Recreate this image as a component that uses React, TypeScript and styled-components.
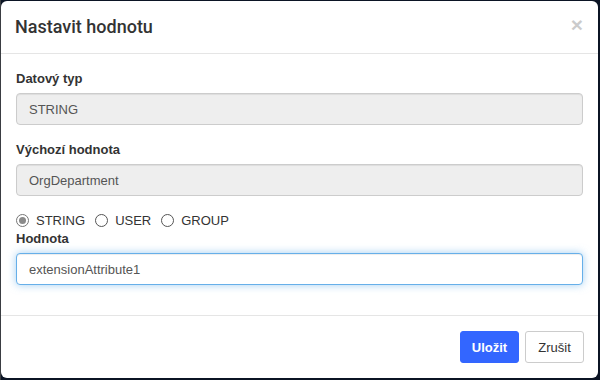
import React from "react";
import styled, { createGlobalStyle } from "styled-components";

const Global = createGlobalStyle`
	html, body {
		margin: 0;
		padding: 0;
		background: #0b1424;
	}
	body {
		font-family: "Liberation Sans", Arial, sans-serif;
		font-size: 13px;
		color: #333;
	}
`;

const Backdrop = styled.div`
	width: 600px;
	height: 380px;
	padding: 1px 2px 2px 1px;
	box-sizing: border-box;
	background: linear-gradient(90deg, #3a3d42 0 1px, #0b1424 1px);
`;

const Modal = styled.div`
	width: 100%;
	height: 100%;
	background: #fff;
	border-radius: 6px;
	display: flex;
	flex-direction: column;
	overflow: hidden;
`;

const Header = styled.div`
	display: flex;
	align-items: center;
	justify-content: space-between;
	padding: 15px 15px 15px 14px;
	height: 22px;
	border-bottom: 1px solid #e5e5e5;
`;

const Title = styled.h4`
	margin: 0;
	font-family: Roboto, "Liberation Sans", sans-serif;
	font-size: 18px;
	font-weight: 500;
	color: #333;
	line-height: 22px;
`;

const Close = styled.button`
	border: 0;
	background: none;
	padding: 0;
	margin: -6px 0 0 0;
	font-size: 21px;
	font-weight: 700;
	line-height: 1;
	color: #000;
	opacity: 0.2;
	font-family: "Liberation Sans", Arial, sans-serif;
`;

const Body = styled.div`
	padding: 15px 15px 0 15px;
	flex: 1;
`;

const Group = styled.div`
	margin-bottom: 15px;
`;

const Label = styled.label`
	display: block;
	font-weight: 700;
	margin-bottom: 5px;
	line-height: 19px;
	color: #333;
`;

const Input = styled.input<{ $focus?: boolean }>`
	display: block;
	width: 100%;
	box-sizing: border-box;
	height: 32px;
	padding: 6px 12px;
	font-size: 13px;
	font-family: "Liberation Sans", Arial, sans-serif;
	color: #555;
	border-radius: 4px;
	border: 1px solid ${(p) => (p.$focus ? "#66afe9" : "#ccc")};
	background: ${(p) => (p.$focus ? "#fff" : "#eee")};
	box-shadow: ${(p) =>
		p.$focus
			? "inset 0 1px 1px rgba(0,0,0,.075), 0 0 8px rgba(102,175,233,.6)"
			: "inset 0 1px 1px rgba(0,0,0,.075)"};
	outline: none;
`;

const RadioRow = styled.div`
	display: flex;
	align-items: center;
	gap: 10px;
	height: 18px;
`;

const RadioLabel = styled.label`
	display: flex;
	align-items: center;
	gap: 7px;
	color: #333;
`;

const Dot = styled.span<{ $on?: boolean }>`
	width: 11px;
	height: 11px;
	border-radius: 50%;
	border: 1px solid ${(p) => (p.$on ? "#767676" : "#555")};
	display: inline-flex;
	align-items: center;
	justify-content: center;
	&::after {
		content: "";
		width: 7px;
		height: 7px;
		border-radius: 50%;
		background: ${(p) => (p.$on ? "#8a8a8a" : "transparent")};
	}
`;

const Footer = styled.div`
	display: flex;
	justify-content: flex-end;
	gap: 6px;
	padding: 15px 14px 15px 15px;
	border-top: 1px solid #e5e5e5;
`;

const Btn = styled.button<{ $primary?: boolean }>`
	height: 32px;
	min-width: 59px;
	padding: 0 10px;
	font-size: 13px;
	font-family: "Liberation Sans", Arial, sans-serif;
	border-radius: 3px;
	border: 1px solid ${(p) => (p.$primary ? "#3366ff" : "#ccc")};
	background: ${(p) => (p.$primary ? "#3366ff" : "#fff")};
	color: ${(p) => (p.$primary ? "#fff" : "#333")};
	font-weight: ${(p) => (p.$primary ? 700 : 400)};
`;

export default function App() {
	const [kind, setKind] = React.useState("STRING");
	return (
		<>
			<Global />
			<Backdrop>
				<Modal>
					<Header>
						<Title>Nastavit hodnotu</Title>
						<Close>×</Close>
					</Header>
					<Body>
						<Group>
							<Label>Datový typ</Label>
							<Input value="STRING" readOnly />
						</Group>
						<Group>
							<Label>Výchozí hodnota</Label>
							<Input value="OrgDepartment" readOnly />
						</Group>
						<RadioRow>
							{["STRING", "USER", "GROUP"].map((k) => (
								<RadioLabel key={k} onClick={() => setKind(k)}>
									<Dot $on={kind === k} />
									{k}
								</RadioLabel>
							))}
						</RadioRow>
						<Group>
							<Label>Hodnota</Label>
							<Input $focus defaultValue="extensionAttribute1" />
						</Group>
					</Body>
					<Footer>
						<Btn $primary>Uložit</Btn>
						<Btn>Zrušit</Btn>
					</Footer>
				</Modal>
			</Backdrop>
		</>
	);
}
